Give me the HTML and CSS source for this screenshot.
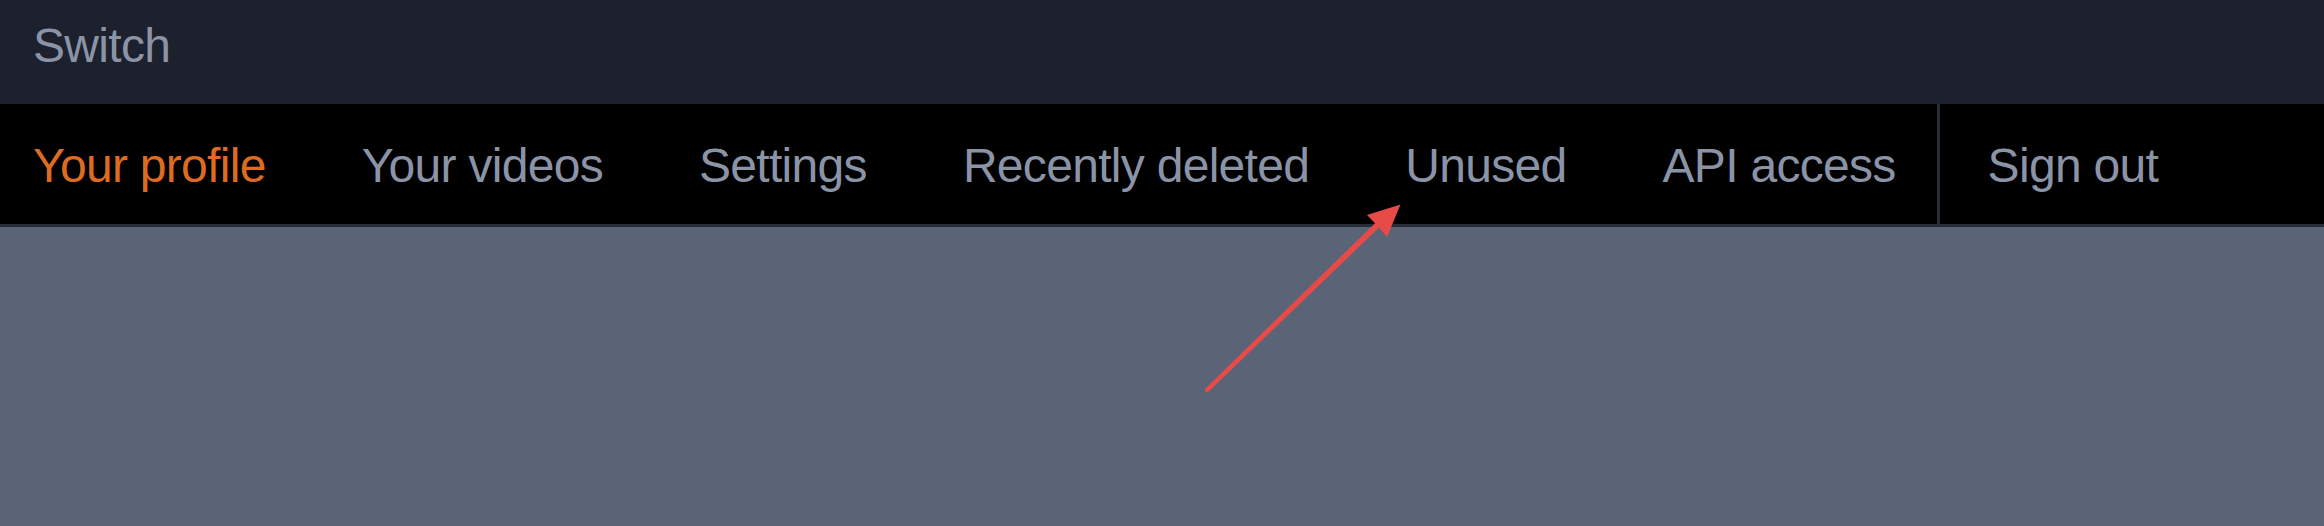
FILE: index.html
```html
<!DOCTYPE html>
<html lang="en">
<head>
<meta charset="utf-8">
<title>Switch</title>
<link rel="stylesheet" href="styles.css">
</head>
<body>
  <header class="topbar">
    <span class="brand">Switch</span>
  </header>
  <nav class="tabs">
    <ul class="tab-list">
      <li><a class="tab active" href="#">Your profile</a></li>
      <li><a class="tab" href="#">Your videos</a></li>
      <li><a class="tab" href="#">Settings</a></li>
      <li><a class="tab" href="#">Recently deleted</a></li>
      <li><a class="tab" href="#">Unused</a></li>
      <li><a class="tab" href="#">API access</a></li>
    </ul>
    <div class="tab-aside">
      <a class="tab" href="#">Sign out</a>
    </div>
  </nav>
  <main class="content"></main>
  <svg class="annotation" width="2324" height="526" viewBox="0 0 2324 526" aria-hidden="true">
    <polygon fill="#e64b48" points="1205.4,388.4 1375,223.2 1367,215 1400.5,204.5 1387,237 1379,227.6 1208.6,391.6"/>
    <circle cx="1207" cy="390" r="2.2" fill="#e64b48"/>
  </svg>
</body>
</html>
```
FILE: styles.css
```css
* { box-sizing: border-box; }

html, body {
  margin: 0;
  padding: 0;
  height: 100%;
}

body {
  background: #5b6477;
  font-family: "Liberation Sans", Arial, sans-serif;
  font-size: 48px;
  letter-spacing: -0.7px;
  color: #8b94a7;
  position: relative;
  overflow: hidden;
}

.topbar {
  background: #1c212d;
  height: 104px;
  padding: 22px 0 0 33px;
  line-height: 48px;
}

.brand {
  color: #8b94a7;
}

.tabs {
  display: flex;
  background: #000;
  height: 123px;
  border-bottom: 3px solid #262c38;
  padding-left: 33px;
}

.tab-list {
  display: flex;
  gap: 96px;
  list-style: none;
  margin: 0;
  padding: 0;
}

.tab {
  display: block;
  color: #8b94a7;
  text-decoration: none;
  line-height: 48px;
  padding-top: 38px;
}

.tab.active {
  color: #dd6b20;
}

.tab-aside {
  margin-left: 41px;
  padding-left: 48px;
  border-left: 3px solid #262c38;
}

.content {
  flex: 1;
}

.annotation {
  position: absolute;
  left: 0;
  top: 0;
  pointer-events: none;
}
```
